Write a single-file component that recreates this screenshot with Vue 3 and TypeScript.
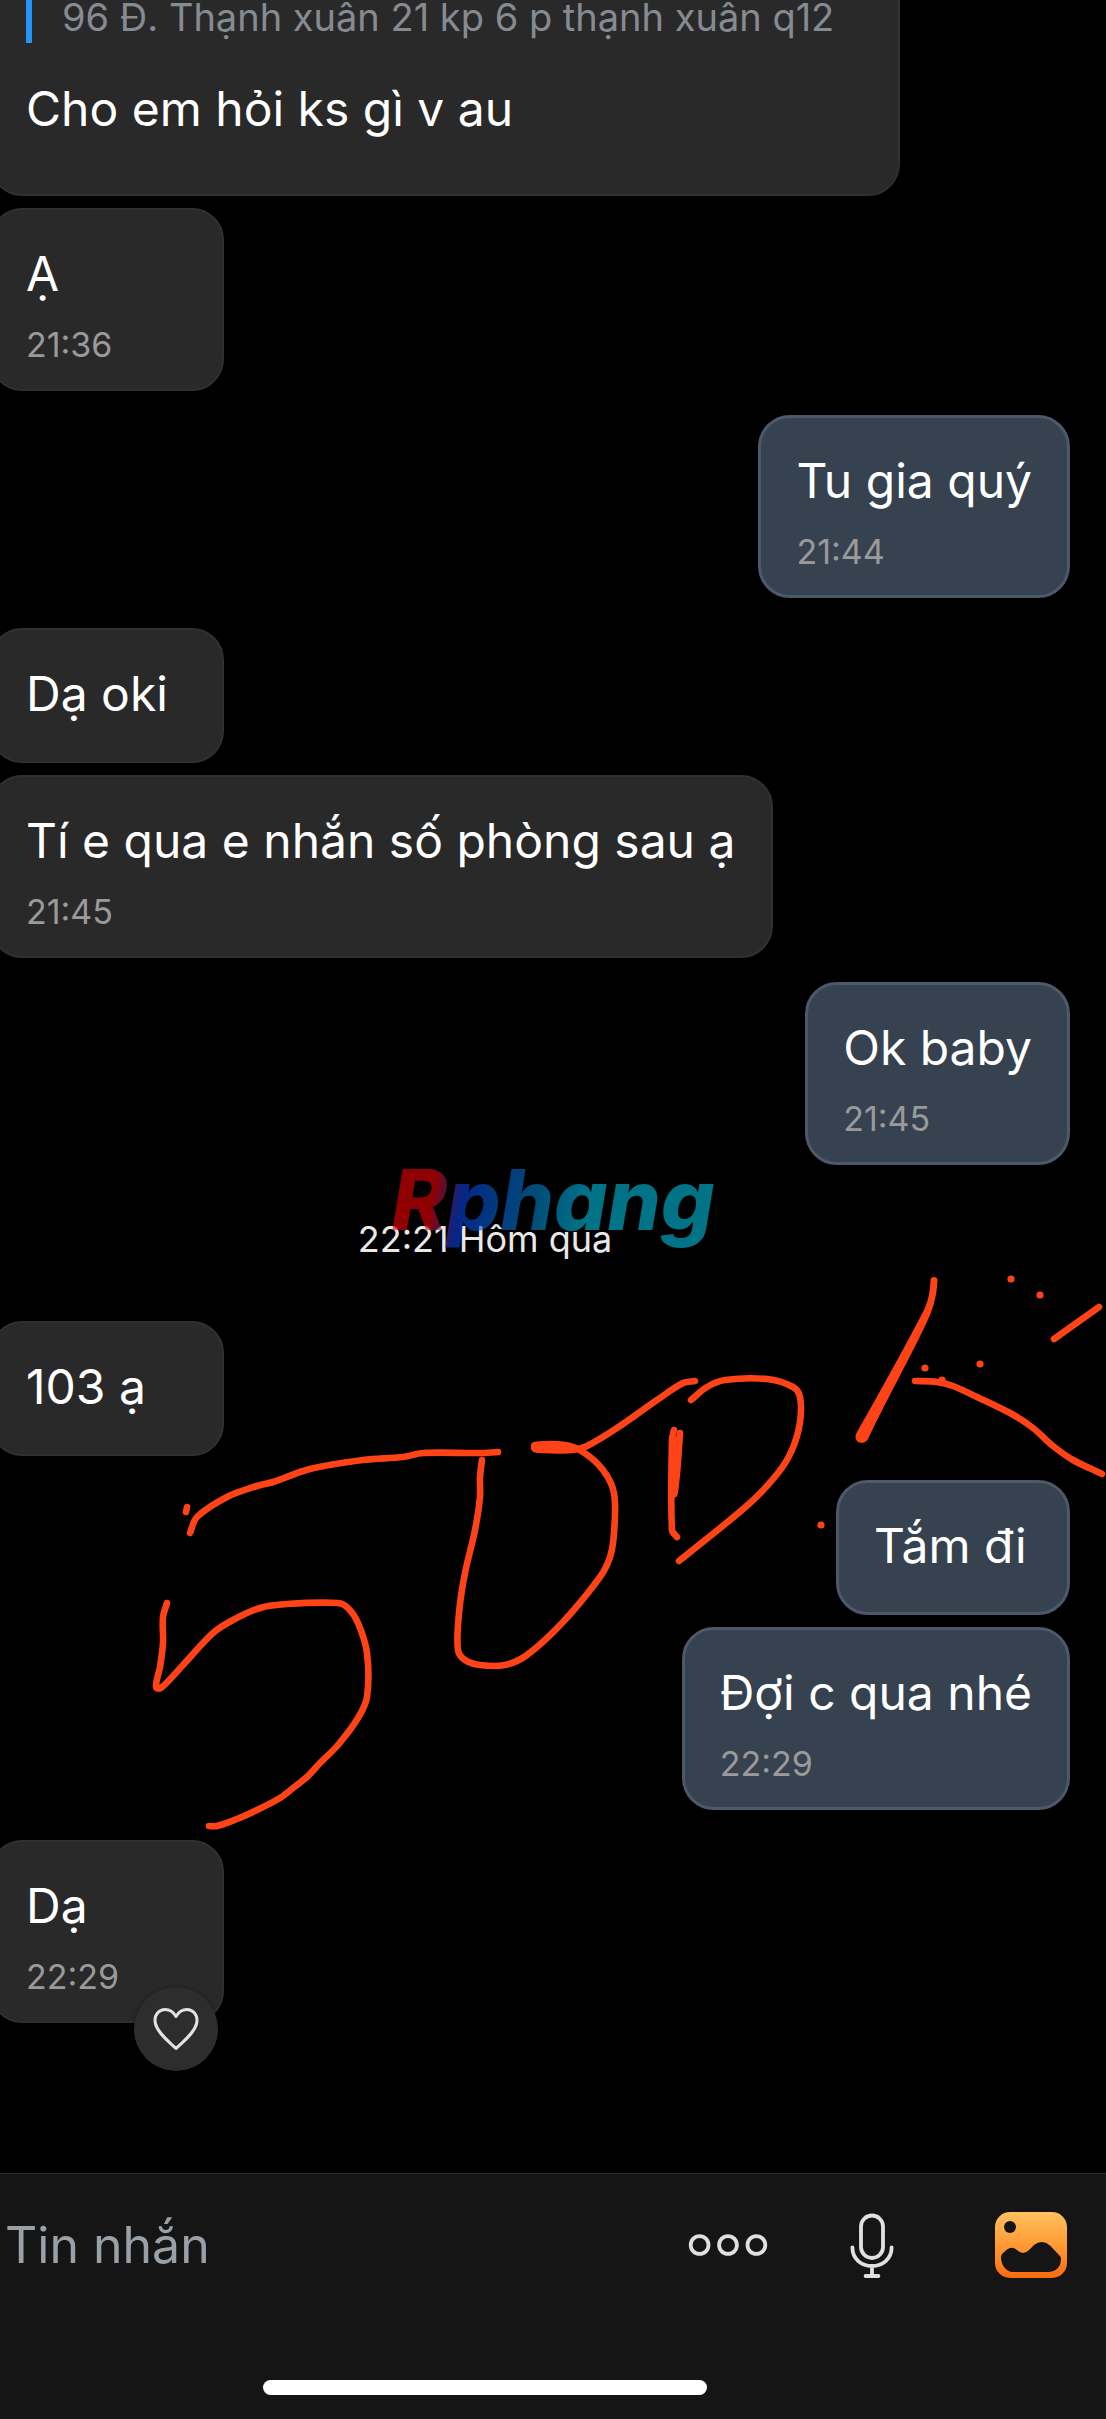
<script setup lang="ts">
import { ref } from 'vue'

interface Message {
  text: string
  own?: boolean
  time?: string
  quote?: string
  likeable?: boolean
}

interface Section {
  label?: string
  messages: Message[]
}

type Point = [number, number]

const sections: Section[] = [
  {
    messages: [
      { text: 'Cho em hỏi ks gì v au', quote: '96 Đ. Thạnh xuân 21 kp 6 p thạnh xuân q12' },
      { text: 'Ạ', time: '21:36' },
      { text: 'Tu gia quý', time: '21:44', own: true },
      { text: 'Dạ oki' },
      { text: 'Tí e qua e nhắn số phòng sau ạ', time: '21:45' },
      { text: 'Ok baby', time: '21:45', own: true },
    ],
  },
  {
    label: '22:21 Hôm qua',
    messages: [
      { text: '103 ạ' },
      { text: 'Tắm đi', own: true },
      { text: 'Đợi c qua nhé', time: '22:29', own: true },
      { text: 'Dạ', time: '22:29', likeable: true },
    ],
  },
]

const draft = ref('')

// Freehand marker strokes drawn over the conversation
const strokes: Point[][] = [
  [[190, 1533], [197, 1517], [227, 1497], [257, 1486], [273, 1482], [310, 1469], [363, 1460], [403, 1457], [423, 1453], [480, 1453], [498, 1452]],
  [[187, 1507], [186, 1512]],
  [[167, 1603], [163, 1617], [163, 1643], [160, 1667], [156, 1687], [161, 1688], [183, 1665], [213, 1633], [233, 1620], [260, 1608], [287, 1604], [338, 1603], [348, 1608], [358, 1623], [367, 1653], [367, 1697], [358, 1718], [338, 1745], [320, 1763], [308, 1776], [293, 1788], [280, 1798], [257, 1810], [237, 1819], [217, 1826], [209, 1826]],
  [[482, 1460], [480, 1477], [480, 1497], [475, 1530], [465, 1573], [459, 1613], [458, 1650], [465, 1660], [480, 1665], [505, 1665], [527, 1655], [563, 1622], [600, 1577], [610, 1557], [614, 1533], [614, 1493], [603, 1470], [583, 1452], [565, 1445], [535, 1445], [535, 1449], [545, 1450], [573, 1450], [587, 1446], [617, 1428], [657, 1400], [683, 1383], [695, 1381]],
  [[691, 1400], [707, 1387], [725, 1380], [767, 1379], [793, 1387], [800, 1397], [800, 1422], [792, 1450], [778, 1473], [750, 1503], [679, 1561]],
  [[674, 1430], [672, 1440], [672, 1530], [677, 1537]],
  [[680, 1433], [677, 1473], [674, 1493], [676, 1440]],
  [[915, 1381], [937, 1382], [953, 1386], [977, 1397], [1010, 1413], [1033, 1428], [1053, 1446], [1073, 1460], [1102, 1474]],
  [[1054, 1339], [1099, 1307]],
]

const dots: Point[] = [[821, 1525], [1011, 1279], [1040, 1295], [925, 1368], [980, 1364], [942, 1380]]

function smoothPath(points: Point[]): string {
  const at = (i: number): Point => points[Math.max(0, Math.min(points.length - 1, i))]
  let d = `M${at(0).join(' ')}`
  for (let i = 0; i < points.length - 1; i++) {
    const [p0, p1, p2, p3] = [at(i - 1), at(i), at(i + 1), at(i + 2)]
    const span = Math.hypot(p2[0] - p1[0], p2[1] - p1[1])
    const control = (from: Point, to: Point, origin: Point, sign: number): Point => {
      const length = Math.hypot(to[0] - from[0], to[1] - from[1]) || 1
      const k = (sign * span) / 3 / length
      return [origin[0] + (to[0] - from[0]) * k, origin[1] + (to[1] - from[1]) * k]
    }
    const c1 = control(p0, p2, p1, 1)
    const c2 = control(p1, p3, p2, -1)
    d += `C${[...c1, ...c2, ...p2].map((n) => n.toFixed(1)).join(' ')}`
  }
  return d
}

const strokePaths = strokes.map(smoothPath)
</script>

<template>
  <div class="chat">
    <main class="thread">
      <section v-for="(section, s) in sections" :key="s" class="section">
        <p v-if="section.label" class="day">{{ section.label }}</p>
        <article
          v-for="(message, m) in section.messages"
          :key="m"
          class="bubble"
          :class="{ own: message.own, timed: message.time, quoting: message.quote }"
        >
          <blockquote v-if="message.quote" class="quote">{{ message.quote }}</blockquote>
          <p class="text">{{ message.text }}</p>
          <time v-if="message.time" class="time">{{ message.time }}</time>
          <button v-if="message.likeable" class="like" type="button" aria-label="Thích">
            <svg viewBox="0 0 48 44" width="48" height="44" aria-hidden="true">
              <path
                d="M24 41.500C20 37 3 25 3 13.500C3 7 7.500 2.500 13 2.500C18 2.500 21.500 5 24 9.500C26.500 5 30 2.500 35 2.500C40.500 2.500 45 7 45 13.500C45 25 28 37 24 41.500Z"
                fill="none" stroke="#e2e2e2" stroke-width="3" stroke-linejoin="round"
              />
            </svg>
          </button>
        </article>
      </section>
    </main>

    <footer class="composer">
      <form class="row" @submit.prevent>
        <input v-model="draft" class="field" type="text" placeholder="Tin nhắn" aria-label="Tin nhắn" />
        <button class="tool" type="button" aria-label="Thêm">
          <svg viewBox="0 0 80 72" width="80" height="72" aria-hidden="true">
            <g fill="none" stroke="#e0e0e0" stroke-width="3.800">
              <circle cx="11.600" cy="36" r="8.900" />
              <circle cx="40" cy="36" r="8.900" />
              <circle cx="68.400" cy="36" r="8.900" />
            </g>
          </svg>
        </button>
        <button class="tool" type="button" aria-label="Ghi âm">
          <svg viewBox="0 0 48 72" width="48" height="72" aria-hidden="true">
            <g fill="none" stroke="#e0e0e0" stroke-width="3.800" stroke-linecap="round">
              <rect x="13" y="6.500" width="22" height="42.500" rx="11" />
              <path d="M4.400 38.500C4.400 50 13.500 57 24 57S43.600 50 43.600 38.500M24 57V67M17.600 67H30.400" />
            </g>
          </svg>
        </button>
        <button class="tool" type="button" aria-label="Hình ảnh">
          <svg viewBox="0 0 72 72" width="72" height="72" aria-hidden="true">
            <defs>
              <linearGradient id="photo" x1="0" y1="0" x2="0" y2="1">
                <stop offset="0" stop-color="#ffc25e" />
                <stop offset="0.600" stop-color="#ff922c" />
                <stop offset="1" stop-color="#fb6a10" />
              </linearGradient>
            </defs>
            <rect y="3" width="72" height="66" rx="15" fill="url(#photo)" />
            <circle cx="15" cy="18" r="6" fill="#151515" />
            <path d="M6 48Q6 46 7.500 44.500L12 40.500Q17 37 22 41Q28 47 34 41L39 36Q47 30 55 36.500L64 46Q66 47.500 66 49.500C66 58 61 63 53 63H18C11 63 6 56 6 48Z" fill="#151515" />
          </svg>
        </button>
      </form>
      <div class="home"></div>
    </footer>

    <svg class="marker" viewBox="0 0 1106 2419" aria-hidden="true">
      <g fill="none" stroke="#ff4317" stroke-width="6.600" stroke-linecap="round" stroke-linejoin="round">
        <path v-for="(d, i) in strokePaths" :key="i" :d="d" />
      </g>
      <g fill="#ff4317">
        <circle v-for="([x, y], i) in dots" :key="i" :cx="x" :cy="y" r="3.600" />
        <path d="M930.500 1280C930.500 1276 937.500 1276 937.500 1280C937 1294 934 1305 930 1315C916 1347 889 1395 868 1439C864 1446 853 1443 856 1434C878 1395 905 1347 924 1310C928 1301 930 1293 930.500 1280Z" />
      </g>
    </svg>
    <div class="watermark" aria-hidden="true">Rphang</div>
  </div>
</template>

<style>
body {
  margin: 0;
  background: #000;
}
</style>

<style scoped>
.chat {
  position: relative;
  display: flex;
  flex-direction: column;
  min-height: 100vh;
  overflow: hidden;
  background: #000;
  color: #fff;
  font-family: Inter, "Noto Sans", sans-serif;
}

.thread {
  flex: 1;
  margin-top: -42px;
  padding: 0 36px 150px 0;
}

.section {
  display: flex;
  flex-direction: column;
  align-items: flex-start;
}

.day {
  align-self: stretch;
  margin: 0;
  padding: 54px 100px 62px 0;
  color: #e8e8e8;
  font-size: 36px;
  line-height: 40px;
  text-align: center;
}

.bubble {
  position: relative;
  box-sizing: border-box;
  min-width: 234px;
  margin-left: -10px;
  padding: 34px 36px 37px 34px;
  border: 2px solid #303030;
  border-radius: 32px;
  background: #292929;
}

.bubble.own {
  align-self: flex-end;
  padding: 33px 35px 36px;
  border: 3px solid #4d586a;
  background: #36424f;
}

.bubble.timed {
  padding-bottom: 24px;
}

.bubble.own.timed {
  padding-bottom: 23px;
}

.bubble.quoting {
  padding-bottom: 55px;
}

.bubble + .bubble {
  margin-top: 12px;
}

.bubble:not(.own) + .bubble.own {
  margin-top: 24px;
}

.bubble.own + .bubble:not(.own) {
  margin-top: 30px;
}

.quote {
  margin: 0 0 36px;
  padding: 0 28px 3px 30px;
  border-left: 6px solid #2494f8;
  color: #868b92;
  font-size: 38px;
  line-height: 46px;
}

.text {
  margin: 0;
  font-size: 48px;
  line-height: 60px;
}

.time {
  display: block;
  margin-top: 21px;
  color: #9a9a9a;
  font-size: 34px;
  line-height: 40px;
}

.like {
  position: absolute;
  right: 4px;
  bottom: -50px;
  display: grid;
  place-items: center;
  width: 84px;
  height: 84px;
  padding: 0;
  border: 0;
  border-radius: 50%;
  background: #2d2d2d;
  box-shadow: 0 0 4px rgba(0, 0, 0, 0.4);
}

.composer {
  display: flex;
  flex-direction: column;
  border-top: 1px solid #2c2c2c;
  background: #151515;
}

.row {
  display: flex;
  align-items: center;
  padding: 34px 39px 0 5px;
}

.field {
  flex: 1;
  min-width: 0;
  height: 74px;
  padding: 0;
  border: 0;
  outline: 0;
  background: none;
  color: #fff;
  font: inherit;
  font-size: 50px;
}

.field::placeholder {
  color: #9aa0a7;
  opacity: 1;
}

.tool {
  display: flex;
  padding: 0;
  border: 0;
  background: none;
}

.tool + .tool {
  margin-left: 80px;
}

.tool:last-child {
  margin-left: 99px;
}

.home {
  align-self: center;
  width: 444px;
  height: 15px;
  margin: 98px 136px 24px 0;
  border-radius: 8px;
  background: #fff;
}

.marker {
  position: absolute;
  top: 0;
  left: 0;
  width: 100%;
  pointer-events: none;
}

.watermark {
  position: absolute;
  top: 50%;
  left: 50%;
  transform: translate(-50%, -60%);
  padding: 0 8px;
  background: linear-gradient(100deg, #f00000 16%, #0a40e0 24%, #0080c8 45%, #00c0e0 60%);
  background-clip: text;
  color: transparent;
  font-size: 84px;
  font-style: italic;
  font-weight: 800;
  line-height: 96px;
  opacity: 0.6;
  pointer-events: none;
}
</style>
